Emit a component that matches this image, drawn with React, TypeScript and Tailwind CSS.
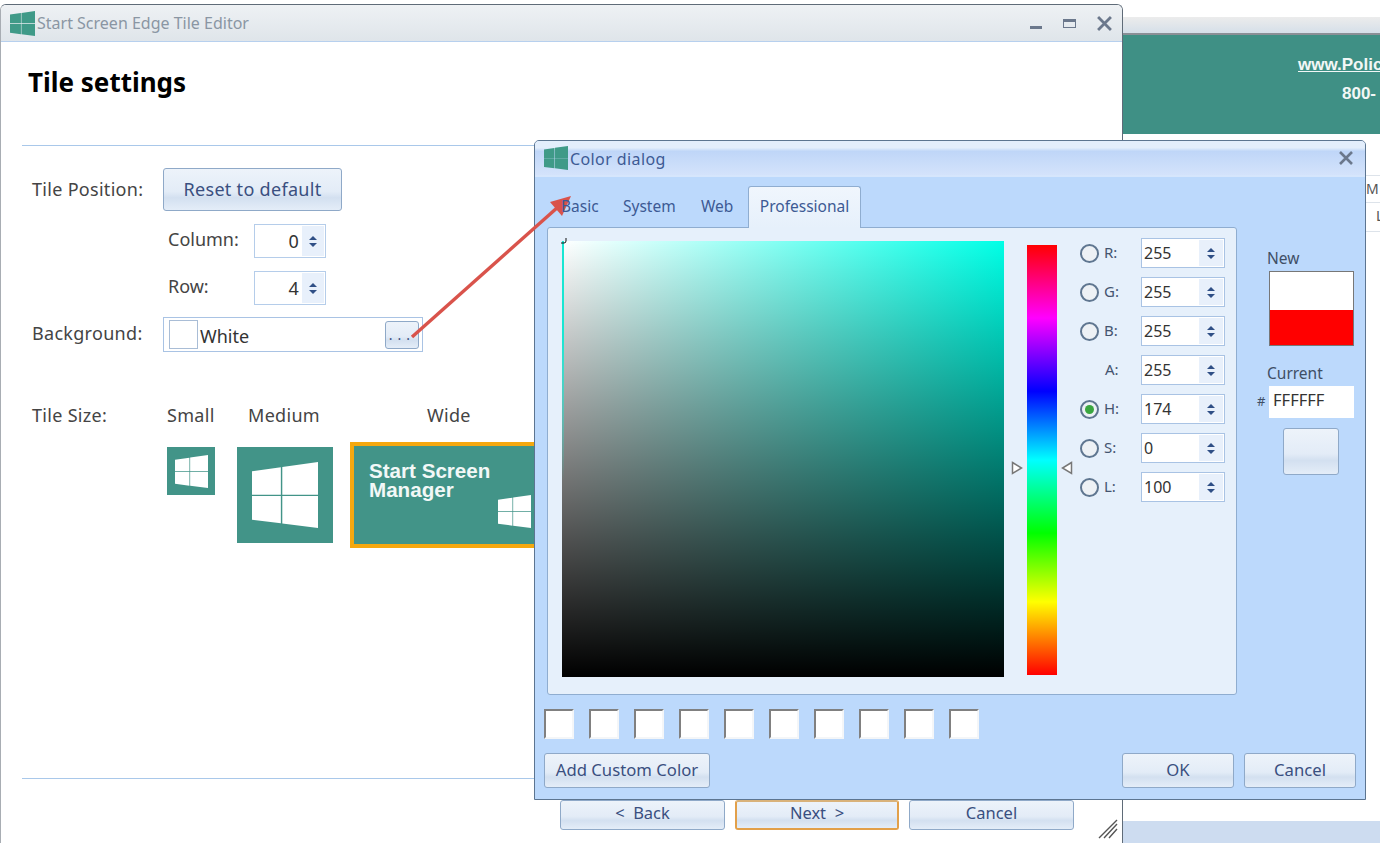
import React from "react";

const WinLogo = ({ className, fill }: { className: string; fill: string }) => (
  <svg viewBox="0 0 183 198" preserveAspectRatio="none" className={className} fill={fill}>
    <path d="M0 28 80 16V98H0ZM84 15 183 0V98H84ZM0 102H80V184L0 173ZM84 102H183V198L84 184.5Z" />
  </svg>
);

const Btn = ({ children, className = "" }: { children?: React.ReactNode; className?: string }) => (
  <div className={`flex items-center justify-center rounded-[3px] border border-[#8fa9c8] bg-[linear-gradient(to_bottom,#edf3fa_0%,#e3ecf7_55%,#d3e0f0_70%,#e4edf8_100%)] text-[#3a4f80] ${className}`}>
    {children}
  </div>
);

const SpinArrows = ({ className = "" }: { className?: string }) => (
  <div className={`flex flex-col items-center justify-center gap-[3px] bg-[#e8f0fb] ${className}`}>
    <div className="h-0 w-0 border-x-[4px] border-b-[4px] border-x-transparent border-b-[#2f4f86]" />
    <div className="h-0 w-0 border-x-[4px] border-t-[4px] border-x-transparent border-t-[#2f4f86]" />
  </div>
);

const SmallSpin = ({ value }: { value: string }) => (
  <div className="flex h-[34px] w-[72px] items-stretch border border-[#b5cdea] bg-white p-px">
    <div className="flex flex-1 items-center justify-end pr-[3px] pt-[1px] text-[18px] text-[#333]">{value}</div>
    <SpinArrows className="w-[22px]" />
  </div>
);

const ColorRow = ({ label, value, radio, checked }: { label: string; value: string; radio: boolean; checked?: boolean }) => (
  <div className="flex h-[30px] items-center">
    <div className="flex w-[20px] justify-start">
      {radio && (
        <div className="flex h-[19px] w-[19px] items-center justify-center rounded-full border-2 border-[#5f7690] bg-[#edf1f5]">
          {checked && <div className="h-[9px] w-[9px] rounded-full bg-[#3aa63f]" />}
        </div>
      )}
    </div>
    <div className={`pb-[2px] text-left text-[15px] text-[#44546f] ${radio ? "ml-[4px] w-[37px]" : "ml-[5px] w-[36px]"}`}>{label}</div>
    <div className="flex h-[30px] w-[84px] items-stretch border border-[#a9c3e4] bg-white p-px">
      <div className="flex flex-1 items-center pl-[1px] text-[16px] text-[#333]">{value}</div>
      <SpinArrows className="w-[24px]" />
    </div>
  </div>
);

const Swatch = () => (
  <div className="h-[30px] w-[30px] border-2 border-[#f4f6f8] border-l-[#808080] border-t-[#808080] bg-white" />
);

export default function App() {
  const swatches = [0, 1, 2, 3, 4, 5, 6, 7, 8, 9];
  return (
    <div className="relative h-[843px] w-[1380px] overflow-hidden bg-white font-['Noto_Sans',sans-serif] text-[16px] text-[#333]">
      {/* window behind */}
      <div className="absolute left-[1123px] top-[17px] flex h-[826px] w-[257px] flex-col bg-white">
        <div className="h-[18px] border-b-2 border-[#8a8f96] bg-[linear-gradient(to_bottom,#ececec,#d5dfe9)]" />
        <div className="flex h-[99px] flex-col items-end bg-[#3f9085] pt-[17px] font-['Liberation_Sans',sans-serif] text-[17px] font-bold text-[#f2f7f6]">
          <div className="w-[82px] underline whitespace-nowrap">www.Police</div>
          <div className="mt-[3px] w-[38px] whitespace-nowrap">800-</div>
        </div>
        <div className="flex-1" />
        <div className="h-[22px] bg-[#cddcf0]" />
      </div>
      <div className="absolute left-[1366px] top-[175px] flex h-[57px] w-[14px] flex-col border-t border-[#dde3ea] text-[14px] leading-[26px]">
        <div className="h-[27px] border-b border-[#dde3ea] text-[#555]">M</div>
        <div className="h-[29px] border-b border-[#dde3ea] pl-[10px] text-[#555]">L</div>
      </div>

      {/* main window */}
      <div className="absolute left-0 top-[4px] flex h-[839px] w-[1123px] flex-col rounded-t-[6px] border-r border-t border-l border-[#5f6b78] border-l-[#a8adb3] bg-white">
        <div className="flex h-[37px] shrink-0 items-center rounded-t-[5px] border-b border-[#b7d0ee] bg-[linear-gradient(to_bottom,#eef1f4,#dfe5ea)] pl-[9px] pr-[10px]">
          <WinLogo className="h-[25px] w-[25px]" fill="#3f9a88" />
          <span className="ml-[2px] pb-[1px] text-[16px] text-[#8a96a3]">Start Screen Edge Tile Editor</span>
          <div className="ml-auto flex items-center gap-[21px] text-[#5e6b80]">
            <div className="mt-[8px] h-[3px] w-[12px] bg-[#6b788c]" />
            <div className="h-[9px] w-[13px] border border-t-[3px] border-[#6b788c]" />
            <svg viewBox="0 0 14 14" className="h-[15px] w-[15px]" stroke="#6b788c" strokeWidth="2.6"><path d="M1 1 13 13M13 1 1 13" /></svg>
          </div>
        </div>
        <div className="flex h-[103px] shrink-0 items-start pl-[27px] pt-[20px] text-[26px] font-bold leading-[40px] text-black">Tile settings</div>
        <div className="ml-[21px] h-px shrink-0 bg-[#a9c8ea]" />
        <div className="relative flex flex-1 flex-col pl-[31px] pt-[22px] tracking-[0.3px]">
          <div className="flex items-center">
            <span className="w-[131px] text-[18px] text-[#444]">Tile Position:</span>
            <Btn className="h-[43px] w-[179px] text-[18px]">Reset to default</Btn>
          </div>
          <div className="ml-[136px] mt-[13px] flex items-center">
            <span className="w-[86px] pb-[4px] text-[18px] tracking-normal text-[#444]">Column:</span>
            <SmallSpin value="0" />
          </div>
          <div className="ml-[136px] mt-[13px] flex items-center">
            <span className="w-[86px] pb-[4px] text-[18px] tracking-normal text-[#444]">Row:</span>
            <SmallSpin value="4" />
          </div>
          <div className="mt-[12px] flex items-center">
            <span className="w-[131px] pb-[2px] text-[18px] text-[#444]">Background:</span>
            <div className="flex h-[35px] w-[260px] items-center border border-[#a9c3e4] pl-[5px] pr-[3px]">
              <div className="h-[29px] w-[29px] border border-[#a9bdd6]" />
              <span className="ml-[2px] pt-[4px] text-[18px] tracking-normal text-[#333]">White</span>
              <Btn className="ml-auto h-[28px] w-[34px] items-end pb-[3px] text-[14px] tracking-[5px]">...</Btn>
            </div>
          </div>
          <div className="mt-[50px] flex h-[26px] items-center text-[18px] text-[#444]">
            <span className="w-[135px]">Tile Size:</span>
            <span className="w-[81px]">Small</span>
            <span className="w-[179px]">Medium</span>
            <span>Wide</span>
          </div>
          <div className="ml-[135px] mt-[14px] flex items-start">
            <div className="mt-[5px] flex h-[48px] w-[48px] items-center justify-center bg-[#429488]">
              <WinLogo className="h-[33px] w-[33px]" fill="#fff" />
            </div>
            <div className="ml-[22px] mt-[5px] flex h-[96px] w-[96px] items-center justify-center bg-[#429488]">
              <WinLogo className="h-[66px] w-[66px]" fill="#fff" />
            </div>
            <div className="relative ml-[17px] h-[106px] w-[320px] border-[4px] border-[#f5a80f] bg-[#429488] pl-[15px] pt-[15px] font-['Liberation_Sans',sans-serif] text-[20.6px] font-bold leading-[19px] tracking-normal text-[#f2f8f7]">
              <div>Start Screen</div>
              <div>Manager</div>
              <WinLogo className="absolute left-[144px] top-[49px] h-[33px] w-[33px]" fill="#fff" />
            </div>
          </div>
          <div className="flex-1" />
          <div className="-ml-[10px] h-px bg-[#a9c8ea]" />
          <div className="ml-[528px] mt-[21px] flex h-[30px] items-center gap-[10px] text-[16.5px] tracking-normal">
            <Btn className="h-[30px] w-[165px] pb-[4px]">&lt;&nbsp; Back</Btn>
            <Btn className="h-[30px] w-[164px] border-2 border-[#e2a04a] border-t-[#d9b27a] pb-[4px]">Next &nbsp;&gt;</Btn>
            <Btn className="h-[30px] w-[165px] pb-[4px]">Cancel</Btn>
          </div>
          <div className="h-[13px]" />
          <svg viewBox="0 0 20 20" className="absolute bottom-[4px] right-[4px] h-[20px] w-[20px]" stroke="#555" strokeWidth="1.4" fill="none">
            <path d="M1 19 19 1M6 19 19 5M11 19 19 10" />
          </svg>
        </div>
      </div>

      {/* color dialog */}
      <div className="absolute left-[534px] top-[140px] flex h-[660px] w-[832px] flex-col rounded-t-[5px] border border-[#5c7591] bg-[#bcd9fc]">
        <div className="flex h-[36px] shrink-0 items-center rounded-t-[4px] border-b-2 border-[#d6e6fc] bg-[linear-gradient(to_bottom,#e3eefc_0%,#e3eefc_20%,#bfd6f8_30%,#d4e3fb_100%)] pl-[9px] pr-[12px]">
          <WinLogo className="h-[24px] w-[24px]" fill="#3f9a88" />
          <span className="ml-[2px] pt-[2px] text-[16px] tracking-[0.4px] text-[#3d5a94]">Color dialog</span>
          <svg viewBox="0 0 14 14" className="ml-auto h-[14px] w-[14px]" stroke="#6b788c" strokeWidth="2.6"><path d="M1 1 13 13M13 1 1 13" /></svg>
        </div>
        <div className="flex flex-1 flex-col px-[9px]">
          {/* tabs */}
          <div className="relative z-10 ml-[3px] mt-[9px] flex h-[42px] items-end text-[15.5px] text-[#3d5a94]">
            <span className="flex h-[40px] w-[60px] items-center pb-[2px] pl-[14px]">Basic</span>
            <span className="flex h-[40px] w-[78px] items-center pb-[2px] pl-[16px]">System</span>
            <span className="flex h-[40px] w-[63px] items-center pb-[2px] pl-[16px]">Web</span>
            <span className="flex h-[42px] w-[113px] items-center justify-center rounded-t-[3px] border border-b-0 border-[#8fadd0] bg-[linear-gradient(to_bottom,#f0f6fd,#e6f0fb)] pb-[2px] text-[#3d5a94]">Professional</span>
          </div>
          <div className="-mt-px ml-[3px] flex h-[468px] w-[690px] rounded-[3px] border border-[#8fadd0] bg-[#e6f0fb] pl-[14px] pt-[13px]">
            <div className="relative h-[436px] w-[442px] bg-[linear-gradient(to_top,#000000,transparent),linear-gradient(to_right,#ffffff,#00ffe6)]">
              <div className="absolute left-0 top-0 h-[240px] w-[2px] bg-[linear-gradient(to_bottom,#19e6d2_0%,#19e6d2_40%,transparent_100%)]" />
              <svg viewBox="0 0 8 8" className="absolute -left-[1px] -top-[3px] h-[8px] w-[8px]" stroke="#111" strokeWidth="1" fill="none"><path d="M0 5H3Q5 5 5 3V0" /></svg>
            </div>
            <div className="relative ml-[23px] mt-[4px] h-[430px] w-[30px] bg-[linear-gradient(to_bottom,#ff0000_0%,#ff00ff_17%,#0000ff_34%,#00ffff_50%,#00ff00_67%,#ffff00_83%,#ff0000_100%)]">
              <svg viewBox="0 0 12 14" className="absolute -left-[16px] top-[216px] h-[14px] w-[12px]" stroke="#777" strokeWidth="1.5" fill="#fff"><path d="M1.5 1.5 10.5 7 1.5 12.5Z" /></svg>
              <svg viewBox="0 0 12 14" className="absolute -right-[16px] top-[216px] h-[14px] w-[12px]" stroke="#777" strokeWidth="1.5" fill="#fff"><path d="M10.5 1.5 1.5 7 10.5 12.5Z" /></svg>
            </div>
            <div className="-mt-[3px] ml-[23px] flex flex-col gap-[9px]">
              <ColorRow label="R:" value="255" radio />
              <ColorRow label="G:" value="255" radio />
              <ColorRow label="B:" value="255" radio />
              <ColorRow label="A:" value="255" radio={false} />
              <ColorRow label="H:" value="174" radio checked />
              <ColorRow label="S:" value="0" radio />
              <ColorRow label="L:" value="100" radio />
            </div>
          </div>
          <div className="mt-[14px] flex gap-[15px]">
            {swatches.map((s) => (
              <Swatch key={s} />
            ))}
          </div>
          <div className="mt-[14px] flex text-[16.7px]">
            <Btn className="h-[35px] w-[166px] pb-[2px]">Add Custom Color</Btn>
            <Btn className="ml-auto h-[35px] w-[112px] pb-[2px]">OK</Btn>
            <Btn className="ml-[10px] h-[35px] w-[112px] pb-[2px]">Cancel</Btn>
          </div>
        </div>
        <div className="absolute left-[722px] top-[105px] flex w-[100px] flex-col text-[15.5px] text-[#3f4f66]">
          <span className="ml-[10px] mt-[1px] h-[24px] leading-[22px]">New</span>
          <div className="ml-[12px] flex h-[75px] w-[85px] flex-col border border-[#777]">
            <div className="h-[38px] bg-white" />
            <div className="flex-1 bg-[#ff0000]" />
          </div>
          <span className="ml-[10px] mt-[16px] h-[24px] leading-[22px]">Current</span>
          <div className="flex items-center">
            <span className="ml-0 w-[12px] text-[13px]">#</span>
            <div className="flex h-[32px] w-[85px] items-center bg-white pb-[4px] pl-[4px] text-[16.5px] text-[#333]">FFFFFF</div>
          </div>
          <Btn className="ml-[26px] mt-[10px] h-[47px] w-[56px]" />
        </div>
      </div>

      {/* annotation arrow */}
      <svg viewBox="0 0 1380 843" className="pointer-events-none absolute left-0 top-0 h-[843px] w-[1380px]" fill="none">
        <path d="M412 337 558 207" stroke="#d9534b" strokeWidth="3.4" />
        <path d="M571 196 550 202 562 216Z" fill="#d9534b" />
      </svg>
    </div>
  );
}
